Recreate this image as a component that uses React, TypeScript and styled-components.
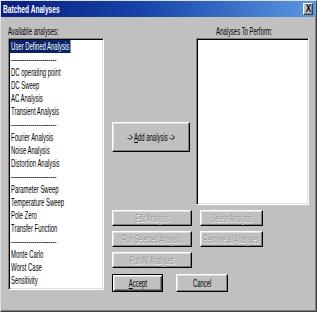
import React from "react";
import styled, { createGlobalStyle, css } from "styled-components";

const Global = createGlobalStyle`
  html, body { margin: 0; padding: 0; background: #c0c0c0; }
  body { font-family: "Liberation Sans", Arial, sans-serif; }
`;

const Window = styled.div`
  box-sizing: border-box;
  width: 317px;
  height: 312px;
  background: #c0c0c0;
  border: 1px solid;
  border-color: #dfdfdf #404040 #404040 #dfdfdf;
  box-shadow: inset -1px -1px #808080;
  display: flex;
  flex-direction: column;
  overflow: hidden;
`;

const TitleBar = styled.div`
  flex: none;
  height: 16px;
  background: linear-gradient(90deg, #0a1e80 0%, #1644aa 45%, #5c98e0 100%);
  display: flex;
  align-items: center;
  justify-content: space-between;
  padding: 0 3px 0 2px;
`;

const Narrow = styled.span<{ $origin?: string; $scale?: number }>`
  display: inline-block;
  white-space: nowrap;
  transform: scaleX(${(p) => p.$scale ?? 0.54});
  transform-origin: ${(p) => p.$origin ?? "left"} center;
`;

const TitleText = styled(Narrow)`
  font: bold 11px "Liberation Sans", Arial, sans-serif;
  color: #fff;
  line-height: 16px;
`;

const CloseBtn = styled.div`
  box-sizing: border-box;
  width: 10px;
  height: 12px;
  background: #c0c0c0;
  border: 1px solid;
  border-color: #fff #404040 #404040 #fff;
  box-shadow: inset -1px -1px #808080;
  display: flex;
  align-items: center;
  justify-content: center;
  font: bold 10px "Liberation Sans", Arial, sans-serif;
  color: #000;
  line-height: 10px;
`;

const Body = styled.div`
  flex: 1;
  display: flex;
  gap: 8px;
  padding: 8px 0 0 7px;
`;

const LeftCol = styled.div`
  width: 96px;
  display: flex;
  flex-direction: column;
`;

const Label = styled.div<{ $center?: boolean }>`
  height: 13px;
  font-size: 11px;
  line-height: 13px;
  color: #000;
  ${(p) =>
    p.$center &&
    css`
      display: flex;
      justify-content: center;
      padding-right: 16px;
    `}
`;

const ListBox = styled.div<{ $h: number }>`
  box-sizing: border-box;
  height: ${(p) => p.$h}px;
  background: #fff;
  border: 1px solid;
  border-color: #808080 #fff #fff #808080;
  box-shadow: inset 1px 1px #000, inset -1px -1px #dfdfdf;
  padding: 1px;
  overflow: hidden;
`;

const Item = styled.div<{ $selected?: boolean }>`
  height: 13px;
  font-size: 11px;
  line-height: 13px;
  color: #000;
  padding-left: ${(p) => (p.$selected ? 0 : 1)}px;
`;

const Selected = styled(Narrow)`
  background: #0a246a;
  color: #fff;
  padding: 0 2px;
`;

const RightArea = styled.div`
  display: grid;
  grid-template-columns: 80px 113px;
  grid-template-rows: 180px 16px 16px 16px 19px;
  column-gap: 4px;
  row-gap: 5px;
  align-content: start;
`;

const MidTop = styled.div`
  display: flex;
  flex-direction: column;
  padding-top: 97px;
`;

const RightTop = styled.div`
  display: flex;
  flex-direction: column;
`;

const Button = styled.button<{ $default?: boolean; $w?: number; $h?: number; $ml?: number }>`
  box-sizing: border-box;
  margin: 0 0 0 ${(p) => p.$ml ?? 0}px;
  padding: 0;
  width: ${(p) => (p.$w ? `${p.$w}px` : "100%")};
  height: ${(p) => (p.$h ? `${p.$h}px` : "100%")};
  background: #c0c0c0;
  border: 1px solid;
  border-color: #fff #000 #000 #fff;
  box-shadow: inset -1px -1px #808080, inset 1px 1px #dfdfdf;
  font: 11px "Liberation Sans", Arial, sans-serif;
  color: #000;
  display: flex;
  align-items: center;
  justify-content: center;
  overflow: visible;
  white-space: nowrap;
  ${(p) =>
    p.$default &&
    css`
      border-color: #000;
      box-shadow: inset 1px 1px #fff, inset -1px -1px #404040, inset 2px 2px #dfdfdf,
        inset -2px -2px #808080;
    `}
  &:disabled {
    color: #969696;
    text-shadow: 1px 1px #f4f4f4;
  }
`;

const BottomRow = styled.div`
  grid-column: 1 / -1;
  display: flex;
  gap: 13px;
  margin-top: 1px;
`;

const items: string[] = [
  "-----------------------",
  "DC operating point",
  "DC Sweep",
  "AC Analysis",
  "Transient Analysis",
  "-----------------------",
  "Fourier Analysis",
  "Noise Analysis",
  "Distortion Analysis",
  "-----------------------",
  "Parameter Sweep",
  "Temperature Sweep",
  "Pole Zero",
  "Transfer Function",
  "-----------------------",
  "Monte Carlo",
  "Worst Case",
  "Sensitivity",
];

const C = ({ children }: { children: React.ReactNode }) => (
  <Narrow $origin="center">{children}</Narrow>
);

export default function App() {
  return (
    <>
      <Global />
      <Window>
        <TitleBar>
          <TitleText $scale={0.6}>Batched Analyses</TitleText>
          <CloseBtn>
            <Narrow $origin="center" $scale={0.8}>X</Narrow>
          </CloseBtn>
        </TitleBar>
        <Body>
          <LeftCol>
            <Label>
              <Narrow>Available analyses:</Narrow>
            </Label>
            <ListBox $h={252}>
              <Item $selected>
                <Selected>User Defined Analysis</Selected>
              </Item>
              {items.map((t, i) => (
                <Item key={i}>
                  <Narrow>{t}</Narrow>
                </Item>
              ))}
            </ListBox>
          </LeftCol>
          <RightArea>
            <MidTop>
              <Button $w={78} $h={30}>
                <C>
                  -&gt; <u>A</u>dd analysis -&gt;
                </C>
              </Button>
            </MidTop>
            <RightTop>
              <Label $center>
                <Narrow $origin="center">Analyses To Perform:</Narrow>
              </Label>
              <ListBox $h={167} />
            </RightTop>
            <Button disabled>
              <C>Edit Analysis</C>
            </Button>
            <Button disabled $w={63} $ml={4}>
              <C>Delete Analysis</C>
            </Button>
            <Button disabled>
              <C>Run Selected Analysis</C>
            </Button>
            <Button disabled $w={63} $ml={4}>
              <C>Remove all Analyses</C>
            </Button>
            <Button disabled>
              <C>Run All Analyses</C>
            </Button>
            <div />
            <BottomRow>
              <Button $default $w={51}>
                <C>
                  <u>A</u>ccept
                </C>
              </Button>
              <Button $w={52}>
                <C>Cancel</C>
              </Button>
            </BottomRow>
          </RightArea>
        </Body>
      </Window>
    </>
  );
}
